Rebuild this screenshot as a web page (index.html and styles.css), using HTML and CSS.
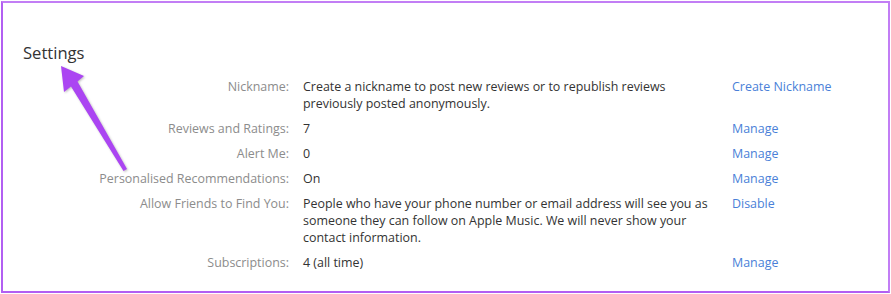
FILE: index.html
```html
<!DOCTYPE html>
<html>
<head>
<meta charset="utf-8">
<link rel="stylesheet" href="styles.css">
</head>
<body>
<div class="panel">
  <h1 class="title">Settings</h1>
  <div class="rows">
    <div class="label">Nickname:</div>
    <div class="value">Create a nickname to post new reviews or to republish reviews previously posted anonymously.</div>
    <div class="action"><a href="#">Create Nickname</a></div>

    <div class="label">Reviews and Ratings:</div>
    <div class="value">7</div>
    <div class="action"><a href="#">Manage</a></div>

    <div class="label">Alert Me:</div>
    <div class="value">0</div>
    <div class="action"><a href="#">Manage</a></div>

    <div class="label">Personalised Recommendations:</div>
    <div class="value">On</div>
    <div class="action"><a href="#">Manage</a></div>

    <div class="label">Allow Friends to Find You:</div>
    <div class="value">People who have your phone number or email address will see you as someone they can follow on Apple Music. We will never show your contact information.</div>
    <div class="action"><a href="#">Disable</a></div>

    <div class="label">Subscriptions:</div>
    <div class="value">4 (all time)</div>
    <div class="action"><a href="#">Manage</a></div>
  </div>
</div>
<svg class="arrow" width="891" height="294" viewBox="0 0 891 294">
  <polygon points="61,66 84,76 77.5,81.5 127,169 123.5,171 71,86.5 64,92" fill="#ab45f2"/>
</svg>
</body>
</html>
```

FILE: styles.css
```css
html, body {
  margin: 0;
  padding: 0;
  background: #ffffff;
}
body {
  font-family: "Open Sans", "Noto Sans", sans-serif;
  position: relative;
  width: 891px;
  height: 294px;
  overflow: hidden;
}
.panel {
  margin: 1px;
  height: 292px;
  box-sizing: border-box;
  border: 2px solid #c27ef5;
  border-left-color: #b25ff2;
  border-bottom-color: #b25ff2;
}
.title {
  margin: 0;
  padding: 38px 0 0 20px;
  font-size: 16.6px;
  line-height: 24px;
  font-weight: 400;
  color: #333333;
}
.rows {
  margin-top: 13px;
  display: grid;
  grid-template-columns: 286px 415px auto;
  column-gap: 14px;
  row-gap: 8px;
  font-size: 12.45px;
  line-height: 17px;
}
.label {
  text-align: right;
  color: #8c8c8c;
}
.value {
  color: #333333;
}
.action a {
  color: #4a7fd8;
  text-decoration: none;
}
.arrow {
  position: absolute;
  left: 0;
  top: 0;
  pointer-events: none;
  filter: drop-shadow(1px 1px 1px rgba(0,0,0,0.25));
}
```
